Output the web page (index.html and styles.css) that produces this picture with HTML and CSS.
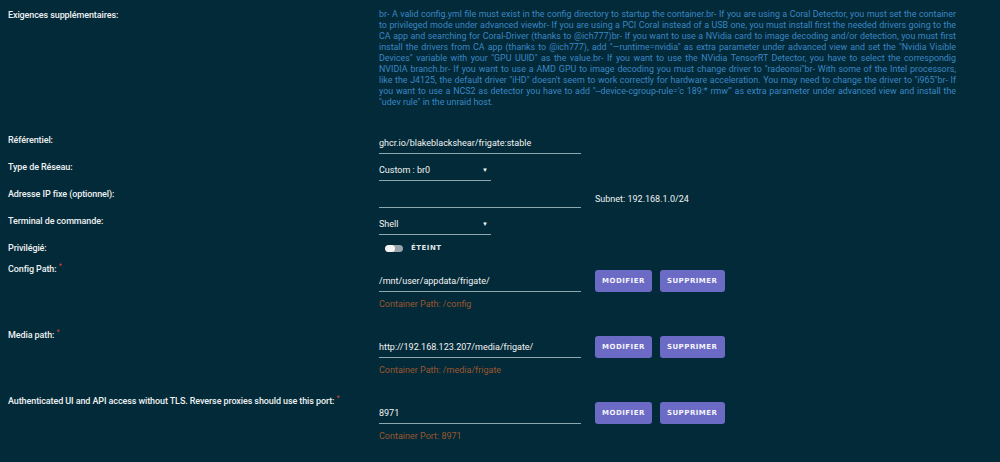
FILE: index.html
```html
<!DOCTYPE html>
<html lang="fr">
  <head>
    <meta charset="utf-8" />
    <meta name="viewport" content="width=device-width, initial-scale=1.0" />
    <title>Frigate - Modifier le conteneur</title>
    <link rel="stylesheet" href="styles.css">
  </head>
  <body>
    <form class="settings">
      <div class="row row-notes">
        <div class="label">Exigences supplémentaires:</div>
        <div class="value">
          <!-- one span per line so the justified wrap stays put -->
          <p class="notes">
            <span>br- A valid config.yml file must exist in the config directory to startup the container.br- If you are using a Coral Detector, you must set the container</span>
            <span>to privileged mode under advanced viewbr- If you are using a PCI Coral instead of a USB one, you must install first the needed drivers going to the</span>
            <span>CA app and searching for Coral-Driver (thanks to @ich777)br- If you want to use a NVidia card to image decoding and/or detection, you must first</span>
            <span>install the drivers from CA app (thanks to @ich777), add "—runtime=nvidia" as extra parameter under advanced view and set the "Nvidia Visible</span>
            <span>Devices" variable with your "GPU UUID" as the value.br- If you want to use the NVidia TensorRT Detector, you have to select the correspondig</span>
            <span>NVIDIA branch.br- If you want to use a AMD GPU to image decoding you must change driver to "radeonsi"br- With some of the Intel processors,</span>
            <span>like the J4125, the default driver "iHD" doesn't seem to work correctly for hardware acceleration. You may need to change the driver to "i965"br- If</span>
            <span>you want to use a NCS2 as detector you have to add "--device-cgroup-rule='c 189:* rmw'" as extra parameter under advanced view and install the</span>
            <span class="last">"udev rule" in the unraid host.</span>
          </p>
        </div>
      </div>

      <div class="row">
        <div class="label">Référentiel:</div>
        <div class="value">
          <div class="field">ghcr.io/blakeblackshear/frigate:stable</div>
        </div>
      </div>

      <div class="row">
        <div class="label">Type de Réseau:</div>
        <div class="value">
          <div class="field select">Custom : br0</div>
        </div>
      </div>

      <div class="row">
        <div class="label">Adresse IP fixe (optionnel):</div>
        <div class="value inline">
          <div class="field"></div>
          <span class="subnet">Subnet: 192.168.1.0/24</span>
        </div>
      </div>

      <div class="row">
        <div class="label">Terminal de commande:</div>
        <div class="value">
          <div class="field select">Shell</div>
        </div>
      </div>

      <div class="row row-short">
        <div class="label">Privilégié:</div>
        <div class="value">
          <div class="switch">
            <span class="track"><span class="knob"></span></span>
            <span class="switch-text">ÉTEINT</span>
          </div>
        </div>
      </div>

      <div class="row row-path">
        <div class="label">Config Path: <sup class="req">*</sup></div>
        <div class="value">
          <div class="inline">
            <div class="field">/mnt/user/appdata/frigate/</div>
            <button type="button" class="btn">Modifier</button>
            <button type="button" class="btn">Supprimer</button>
          </div>
          <div class="hint">Container Path: /config</div>
        </div>
      </div>

      <div class="row row-path">
        <div class="label">Media path: <sup class="req">*</sup></div>
        <div class="value">
          <div class="inline">
            <div class="field">http://192.168.123.207/media/frigate/</div>
            <button type="button" class="btn">Modifier</button>
            <button type="button" class="btn">Supprimer</button>
          </div>
          <div class="hint">Container Path: /media/frigate</div>
        </div>
      </div>

      <div class="row row-path">
        <div class="label">Authenticated UI and API access without TLS. Reverse proxies should use this port: <sup class="req">*</sup></div>
        <div class="value">
          <div class="inline">
            <div class="field">8971</div>
            <button type="button" class="btn">Modifier</button>
            <button type="button" class="btn">Supprimer</button>
          </div>
          <div class="hint">Container Port: 8971</div>
        </div>
      </div>
    </form>
  </body>
</html>
```

FILE: styles.css
```css
* {
  padding: 0;
  margin: 0;
  box-sizing: border-box;
}
body {
  background-color: #032a38;
  color: #eef2f3;
  font-family: Roboto, "Liberation Sans", sans-serif;
  font-size: 9px;
}
.settings {
  display: flex;
  flex-direction: column;
  gap: 6px;
  padding: 8px 0 0 8px;
}
.row {
  display: flex;
  min-height: 21px;
}
.row-notes {
  margin-bottom: 19px;
}
.row-short {
  min-height: 15px;
}
.row-path {
  height: 60px;
}
.label {
  width: 371px;
  flex-shrink: 0;
  line-height: 14px;
  font-weight: 500;
  letter-spacing: -0.1px;
}
.req {
  color: #b8443f;
  font-size: 7px;
  vertical-align: top;
  line-height: 8px;
}
.value {
  flex: 1;
}
.inline {
  display: flex;
  align-items: center;
}
.notes {
  width: 577px;
  color: #3a86c4;
  font-size: 8.9px;
  line-height: 11px;
  padding-top: 1px;
}
.notes span {
  display: block;
  text-align: justify;
  text-align-last: justify;
}
.notes span.last {
  text-align-last: left;
}
.field {
  width: 202px;
  height: 21px;
  line-height: 20px;
  border-bottom: 1.5px solid #8ea6ad;
  color: #f2f4f5;
}
.field.select {
  width: 112px;
  position: relative;
}
.field.select::after {
  content: "\25BC";
  position: absolute;
  right: 3px;
  top: 0;
  font-size: 6px;
}
.subnet {
  margin-left: 14px;
  padding-top: 2px;
}
.switch {
  display: flex;
  align-items: center;
  height: 14px;
  padding-left: 6px;
  gap: 8px;
}
.track {
  display: block;
  width: 18px;
  height: 7px;
  border-radius: 4px;
  background-color: #9aa4a8;
  overflow: hidden;
}
.knob {
  display: block;
  width: 10px;
  height: 7px;
  border-radius: 4px;
  background-color: #f4f4f4;
}
.switch-text {
  font-family: "DejaVu Sans", sans-serif;
  font-weight: bold;
  font-size: 7px;
  letter-spacing: 0.5px;
  color: #dfe5e7;
}
.row-path .value {
  padding-top: 8px;
}
.btn {
  height: 22px;
  padding: 0 7px;
  margin-left: 14px;
  border: none;
  border-radius: 3px;
  background-color: #6b6bc5;
  color: #f4f4fb;
  font-family: "DejaVu Sans", sans-serif;
  font-weight: bold;
  font-size: 7px;
  letter-spacing: 0.5px;
  text-transform: uppercase;
}
.btn + .btn {
  margin-left: 8px;
}
.hint {
  margin-top: 5px;
  line-height: 14px;
  color: #9a5630;
}
```
